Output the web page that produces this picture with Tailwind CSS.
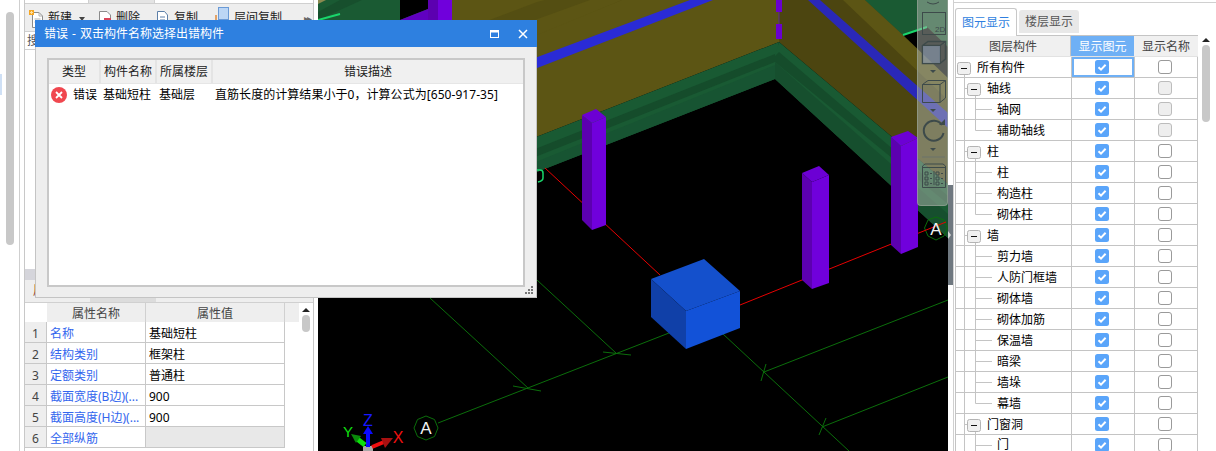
<!DOCTYPE html>
<html lang="zh-CN">
<head>
<meta charset="utf-8">
<title>错误</title>
<script src="https://cdn.jsdelivr.net/npm/@tailwindcss/browser@4"></script>
</head>
<body class="bg-white">
<svg width="0" height="0" class="absolute">
  <defs>
    <symbol id="on" viewBox="0 0 14 14"><rect width="14" height="14" rx="2.5" fill="#5aa5fa"/><path d="M3.5 7.2 6 9.6 10.6 4.8" fill="none" stroke="#fff" stroke-width="2"/></symbol>
    <symbol id="off" viewBox="0 0 14 14"><rect x=".5" y=".5" width="13" height="13" rx="2.5" fill="#fff" stroke="#9a9a9a"/></symbol>
    <symbol id="dis" viewBox="0 0 14 14"><rect x=".5" y=".5" width="13" height="13" rx="2.5" fill="#eeeeee" stroke="#bcbcbc"/></symbol>
    <symbol id="t0" viewBox="0 0 116 21"><path d="M9.500 18V21" fill="none" stroke="#c4c4c4"/><rect x="2.500" y="5.500" width="13" height="12" rx="2" fill="#f0f0f0" stroke="#b4b4b4"/><path d="M6 11.500H12" stroke="#111"/></symbol>
    <symbol id="t1" viewBox="0 0 116 21"><path d="M9.500 0V21M9.500 10.500H12M20.500 17V21" fill="none" stroke="#c4c4c4"/><rect x="12.500" y="5.500" width="13" height="12" rx="2" fill="#f0f0f0" stroke="#b4b4b4"/><path d="M16 11.500H22" stroke="#111"/></symbol>
    <symbol id="tm" viewBox="0 0 116 21"><path d="M9.500 0V21M20.500 0V21M20.500 10.500H37" fill="none" stroke="#c4c4c4"/></symbol>
    <symbol id="tl" viewBox="0 0 116 21"><path d="M9.500 0V21M20.500 0V10.500H37" fill="none" stroke="#c4c4c4"/></symbol>
  </defs>
</svg>

<div class="relative flex w-[1216px] h-[451px] overflow-hidden text-[12px] leading-none text-black bg-white" style="font-family:'Noto Sans','Noto Sans CJK SC',sans-serif">

  <!-- left column -->
  <aside class="flex w-[318px] h-full shrink-0 bg-white">
    <div class="relative w-[20px] shrink-0 border-r border-[#cfcfcf]">
      <div class="absolute left-0 top-[74px] w-[2px] h-[21px] bg-[#cfe0f5]"></div>
      <div class="absolute left-[6px] top-[12px] w-[8px] h-[233px] rounded-full bg-[#c8c8c8]"></div>
    </div>
    <div class="w-[4px] shrink-0"></div>
    <div class="flex flex-col w-[290px] shrink-0 border-x border-[#c8c8c8]">
      <div class="flex h-[4px] shrink-0 border-b border-[#d0d0d0]">
        <div class="w-[64px] bg-white border-r border-[#d0d0d0]"></div>
        <div class="w-[66px] bg-[#e4e4e4] border-r border-[#d0d0d0]"></div>
      </div>
      <div class="flex items-center h-[28px] shrink-0 bg-[#eeeeee] border-b border-[#d0d0d0] text-[#222]">
        <svg class="ml-[4px] mt-[2px]" width="15" height="18" viewBox="0 0 15 18"><path d="M3.500 2.500H10L13.500 6V17.500H3.500Z" fill="#fff" stroke="#8b8b8b"/><path d="M10 2.500V6H13.500M5.500 9H11.500M5.500 12H11.500" fill="none" stroke="#b0b0b0"/><rect x="0" y="0" width="5" height="5" fill="#f5a623"/><path d="M1 2.500H4M2.500 1V4" stroke="#ffe0a0"/></svg>
        <span class="ml-[4px]">新建</span>
        <span class="ml-[7px] mt-[3px] w-0 h-0 border-x-[3px] border-t-[4px] border-x-transparent border-t-[#444]"></span>
        <svg class="ml-[13px] mt-[2px]" width="14" height="18" viewBox="0 0 14 18"><path d="M1.500 1.500H9L12.500 5V17H1.500Z" fill="#fff" stroke="#8b8b8b"/><rect x="6" y="8" width="7" height="7" fill="#d8455a"/></svg>
        <span class="ml-[4px]">删除</span>
        <svg class="ml-[16px] mt-[2px]" width="13" height="18" viewBox="0 0 13 18"><path d="M1.500 1.500H8.500L11.500 5V17H1.500Z" fill="#fff" stroke="#5c7fa8"/><path d="M4 7H9M4 10H9M4 13H9" stroke="#5c7fa8"/></svg>
        <span class="ml-[5px]">复制</span>
        <svg class="ml-[14px] mt-[-3px]" width="17" height="20" viewBox="0 0 17 20"><path d="M1 20V14M4 20V9" stroke="#e08a3c" stroke-width="1.500"/><rect x="6.500" y="1.500" width="10" height="12" fill="#bcd6f5" stroke="#6a9ad6"/></svg>
        <span class="ml-[5px]">层间复制</span>
        <span class="ml-auto mr-[3px] text-[#666] text-[10px] tracking-[-2px]">▸▸</span>
      </div>
      <div class="flex items-center h-[18px] shrink-0 pl-[2px] border-b border-[#d0d0d0] text-[#555]">搜</div>
      <div class="flex-1 bg-white"></div>
      <div class="h-[11px] shrink-0 bg-[#d5d5db]"></div>
      <div class="relative h-[23px] shrink-0 bg-[#eeeeee] border-b border-[#d0d0d0]">
        <span class="absolute left-[8px] top-[5px] text-[#8b3a1a]">属性</span>
        <div class="absolute left-[65px] bottom-0 w-[66px] h-[6px] bg-[#dcdcdc]"></div>
      </div>
      <div class="relative h-[148px] shrink-0">
        <div class="grid grid-cols-[22px_99px_139px_14px] h-[19px] text-[#444]">
          <div class="bg-white"></div>
          <div class="flex items-center justify-center pt-[2px] bg-[#eeeeee] border-r border-[#d0d0d0]">属性名称</div>
          <div class="flex items-center justify-center pt-[2px] bg-[#eeeeee] border-r border-[#d0d0d0]">属性值</div>
          <div class="bg-[#eeeeee]"></div>
        </div>
        <div class="grid grid-cols-[22px_99px_139px] h-[21px] w-[260px]">
          <div class="flex items-center justify-center pt-[3px] bg-[#eeeeee] text-[#444] border-b border-r border-[#c8c8c8]">1</div>
          <div class="flex items-center pl-[3px] pt-[3px] text-[#3366ee] border-b border-r border-[#c8c8c8]">名称</div>
          <div class="flex items-center pl-[3px] pt-[3px] border-b border-r border-[#c8c8c8]">基础短柱</div>
        </div>
        <div class="grid grid-cols-[22px_99px_139px] h-[21px] w-[260px]">
          <div class="flex items-center justify-center pt-[3px] bg-[#eeeeee] text-[#444] border-b border-r border-[#c8c8c8]">2</div>
          <div class="flex items-center pl-[3px] pt-[3px] text-[#3366ee] border-b border-r border-[#c8c8c8]">结构类别</div>
          <div class="flex items-center pl-[3px] pt-[3px] border-b border-r border-[#c8c8c8]">框架柱</div>
        </div>
        <div class="grid grid-cols-[22px_99px_139px] h-[21px] w-[260px]">
          <div class="flex items-center justify-center pt-[3px] bg-[#eeeeee] text-[#444] border-b border-r border-[#c8c8c8]">3</div>
          <div class="flex items-center pl-[3px] pt-[3px] text-[#3366ee] border-b border-r border-[#c8c8c8]">定额类别</div>
          <div class="flex items-center pl-[3px] pt-[3px] border-b border-r border-[#c8c8c8]">普通柱</div>
        </div>
        <div class="grid grid-cols-[22px_99px_139px] h-[21px] w-[260px]">
          <div class="flex items-center justify-center pt-[3px] bg-[#eeeeee] text-[#444] border-b border-r border-[#c8c8c8]">4</div>
          <div class="flex items-center pl-[3px] pt-[3px] text-[#3366ee] border-b border-r border-[#c8c8c8] whitespace-nowrap">截面宽度(B边)(...</div>
          <div class="flex items-center pl-[3px] pt-[3px] border-b border-r border-[#c8c8c8]">900</div>
        </div>
        <div class="grid grid-cols-[22px_99px_139px] h-[21px] w-[260px]">
          <div class="flex items-center justify-center pt-[3px] bg-[#eeeeee] text-[#444] border-b border-r border-[#c8c8c8]">5</div>
          <div class="flex items-center pl-[3px] pt-[3px] text-[#3366ee] border-b border-r border-[#c8c8c8] whitespace-nowrap">截面高度(H边)(...</div>
          <div class="flex items-center pl-[3px] pt-[3px] border-b border-r border-[#c8c8c8]">900</div>
        </div>
        <div class="grid grid-cols-[22px_99px_139px] h-[21px] w-[260px]">
          <div class="flex items-center justify-center pt-[3px] bg-[#eeeeee] text-[#444] border-b border-r border-[#c8c8c8]">6</div>
          <div class="flex items-center pl-[3px] pt-[3px] text-[#3366ee] border-b border-r border-[#c8c8c8]">全部纵筋</div>
          <div class="bg-[#e8e8e8] border-b border-r border-[#c8c8c8]"></div>
        </div>
        <div class="absolute left-[277px] top-[5px] w-[8px] h-[24px] flex flex-col items-center gap-[3px]">
          <span class="w-0 h-0 border-x-[4px] border-b-[4px] border-x-transparent border-b-[#222]"></span>
          <span class="w-[8px] h-[20px] rounded-full bg-[#c8c8c8]"></span>
        </div>
      </div>
    </div>
  </aside>

  <!-- 3D view -->
  <main class="relative w-[630px] h-full shrink-0 bg-black overflow-hidden">
    <svg class="block" width="630" height="451" viewBox="318 0 630 451" style="font-family:'Liberation Sans',sans-serif">
      <!-- far corner at the top -->
      <rect x="318" y="0" width="135" height="40" fill="#1a5a33"/>
      <path d="M400 0H428V9L400 20Z" fill="#000"/>
      <path d="M340 0 362 0 318 20 318 12Z" fill="#174f2d"/>
      <path d="M318 0H326L318 4Z" fill="#8a8a50"/>
      <path d="M318 20 340 14" stroke="#19d66b" stroke-width="2"/>
      <path d="M400 20 428 9V24H400Z" fill="#6000c0"/>
      <rect x="428" y="0" width="10" height="24" fill="#5c00b0"/>
      <rect x="438" y="0" width="14" height="24" fill="#7000dc"/>

      <!-- left wall -->
      <path d="M452 0H779V42L452 170Z" fill="#5c5514"/>
      <path d="M452 34 537 2 545 0H622L452 68Z" fill="#544e12"/>
      <path d="M452 50 590 0H622L452 70Z" fill="#5c5514"/>
      <path d="M452 89 690 0H713L452 101Z" fill="#2a2bd6"/>
      <path d="M452 170 779 42 775 79 452 205Z" fill="#195a33"/>
      <path d="M452 182 775 54V62L452 190Z" fill="#154c2b"/>
      <path d="M452 196 775 65 775 79 452 205Z" fill="#175432"/>

      <!-- right wall -->
      <path d="M779 0H948V184L779 42Z" fill="#4c4510"/>
      <path d="M843 0H865L903 35 948 78V100Z" fill="#5c5514"/>
      <path d="M808 0H820L948 113V128Z" fill="#2a28b8"/>
      <path d="M865 0H948V47L927 27 903 35Z" fill="#1a5a33"/>
      <path d="M903 35 927 27 948 47V78Z" fill="#000"/>
      <path d="M903 35 927 27" stroke="#19d66b" stroke-width="2"/>
      <path d="M779 42 948 184V238L775 79V56Z" fill="#195a33"/>
      <path d="M779 52 948 196V204L775 62V56Z" fill="#154c2b"/>
      <path d="M775 62 948 214V238L775 79Z" fill="#164f2e"/>
      <path d="M776 0H782V12H776ZM776 24H782V39H776Z" fill="#6a00d0"/>
      <path d="M779 12V24" stroke="#5c2a9a"/>

      <!-- grid lines -->
      <g fill="none" stroke="#0b6e0b" stroke-width="1">
        <path d="M438 423 669 333"/>
        <path d="M430 298 528 388M537 280 616 353"/>
        <path d="M513 386 541 391M603 352 631 355"/>
        <path d="M723 334 849 451"/>
        <path d="M766 364 761 381M826 418 819 435"/>
        <path d="M764 372 948 300M822 427 948 377"/>
        <path d="M426 416 434.500 419.500 438 428 434.500 436.500 426 440 417.500 436.500 414 428 417.500 419.500Z"/>
        <path d="M936 217 944 220 947.500 228 944 236 936 240 928 236 924.500 228 928 220Z"/>
      </g>
      <path d="M537 170H540Q543 170 543 173V178Q543 181 538 182" fill="none" stroke="#19d66b" stroke-width="1.500"/>

      <!-- red axes -->
      <g fill="none" stroke="#e60000" stroke-width="1">
        <path d="M545 168 660 275"/>
        <path d="M740 305 946 222"/>
      </g>

      <!-- columns -->
      <path d="M582 115 592 123V230L582 220Z" fill="#5c00b0"/>
      <path d="M592 123 606 117V225L592 230Z" fill="#7000dc"/>
      <path d="M582 115 596 109 606 117 592 123Z" fill="#6c00d4"/>
      <path d="M802 173 812 182V289L802 280Z" fill="#5c00b0"/>
      <path d="M812 182 829 175V283L812 289Z" fill="#7000dc"/>
      <path d="M802 173 819 166 829 175 812 182Z" fill="#6c00d4"/>
      <path d="M891 137 901 146V254L891 245Z" fill="#5c00b0"/>
      <path d="M901 146 918 138V247L901 254Z" fill="#7000dc"/>
      <path d="M891 137 908 131 918 138 901 146Z" fill="#6c00d4"/>

      <!-- cube -->
      <path d="M651 279 704 259 740 291 686 311Z" fill="#1450cc"/>
      <path d="M651 279 686 311V349L651 317Z" fill="#1040a8"/>
      <path d="M686 311 740 291V328L686 349Z" fill="#1252d8"/>

      <text x="426" y="434" text-anchor="middle" font-size="17" fill="#f2f2f2">A</text>
      <text x="936" y="235" text-anchor="middle" font-size="17" fill="#f2f2f2">A</text>

      <!-- axis gizmo -->
      <rect x="363" y="446" width="10" height="5" fill="#a8a8a8"/>
      <path d="M366 447V434H363L368 426 373 434H370V447Z" fill="#0a0aff"/>
      <path d="M365 445 356 438" stroke="#0ce00c" stroke-width="5"/>
      <path d="M351 434 361 436 356 443Z" fill="#0a8a0a"/>
      <path d="M372 447 384 442" stroke="#f01010" stroke-width="4"/>
      <path d="M381 438 393 438 385 448Z" fill="#a81010"/>
      <text x="368" y="426" text-anchor="middle" font-size="16" fill="#1818ff">Z</text>
      <text x="348" y="437" text-anchor="middle" font-size="15" fill="#10e010">Y</text>
      <text x="398" y="443" text-anchor="middle" font-size="16" fill="#f01010">X</text>
    </svg>

    <!-- floating view toolbar -->
    <div class="absolute left-[599px] top-[-4px] w-[31px] h-[210px] rounded-[4px] bg-[#b0b8b0]/50 border border-[#9aa49a]/60">
      <svg class="block" width="31" height="210" viewBox="0 0 31 210" fill="none" stroke="#3d4a4a">
        <path d="M9 5Q15 9 21 5"/>
        <rect x="4.500" y="15.500" width="23" height="22"/>
        <text x="17" y="35" font-size="8" fill="#3d4a4a" stroke="none" style="font-family:'Liberation Sans',sans-serif">2D</text>
        <path d="M4.500 48.500 10 44.500H27.500V62L22 66.500H4.500ZM4.500 48.500H22V66.500M22 48.500 27.500 44.500" stroke-width="1.500"/>
        <rect x="5" y="49" width="17" height="17" fill="#8a9ab0" fill-opacity=".6" stroke="none"/>
        <path d="M12 73H18L15 76Z" fill="#3d4a4a" stroke="none"/>
        <path d="M4.500 87.500 10 83.500H27.500V101L22 105.500H4.500ZM4.500 87.500H22V105.500M22 87.500 27.500 83.500"/>
        <path d="M12 112H18L15 115Z" fill="#3d4a4a" stroke="none"/>
        <path d="M24 128A10 10 0 1 0 25.500 136" stroke-width="2"/>
        <path d="M21 128H27V122Z" fill="#3d4a4a" stroke="none"/>
        <path d="M12 151H18L15 154Z" fill="#3d4a4a" stroke="none"/>
        <path d="M4 160H27" stroke="#6a726a"/>
        <path d="M4.500 169 7 167H25L27.500 169V190.500H4.500ZM4.500 170.500H27.500M16 174V188"/>
        <path d="M7 175H10V178H7ZM7 180H10V183H7ZM7 185H10V188H7ZM12 176.500H14M12 181.500H14M12 186.500H14M18 175H21V178H18ZM18 180H21V183H18ZM18 185H21V188H18ZM23 176.500H25M23 181.500H25M23 186.500H25"/>
      </svg>
    </div>
  </main>

  <!-- narrow splitter -->
  <div class="w-[5px] h-full shrink-0 bg-white pt-[185px]">
    <div class="flex items-center h-[100px] bg-[#6f7880]">
      <span class="w-0 h-0 border-y-[4px] border-l-[3px] border-y-transparent border-l-[#d8d8d8]"></span>
    </div>
  </div>

  <!-- right panel -->
  <section class="relative flex-1 h-full border-l border-[#d0d0d0] bg-white">
    <div class="h-[3px] border-b border-[#d0d0d0] -mr-px"></div>
    <div class="flex items-end h-[32px] pl-[1px] pt-[5px] gap-[2px]">
      <div class="flex items-center justify-center w-[62px] h-[28px] -mb-px z-10 rounded-t-[3px] border border-b-0 border-[#c8c8c8] bg-white text-[#2f7fe0]">图元显示</div>
      <div class="flex items-center justify-center w-[60px] h-[23px] mb-[2px] rounded-t-[3px] bg-[#e8e8e8] text-[#555]">楼层显示</div>
    </div>

    <div class="ml-[1px] w-[243px] border-l border-t border-[#c4c4c4]">
      <div class="grid grid-cols-[115px_63px_64px] h-[21px] bg-[#f0f0f0] border-b border-[#e2e2e2] text-[#444]">
        <div class="flex items-center justify-center pt-[2px] border-r border-[#c4c4c4]">图层构件</div>
        <div class="flex items-center justify-center pt-[2px] bg-[#6fb0f5] text-white">显示图元</div>
        <div class="flex items-center justify-center pt-[2px]">显示名称</div>
      </div>
      <div class="grid grid-cols-[116px_62px_64px] h-[21px] border-b border-[#c4c4c4]">
        <div class="relative flex items-center pl-[21px] pt-[2px] border-r border-[#c4c4c4]"><svg class="absolute left-[-1px] top-0 w-[116px] h-[21px]"><use href="#t0"/></svg>所有构件</div>
        <div class="flex items-center justify-center pr-[2px] outline-2 -outline-offset-2 outline-[#6fb0f5]"><svg class="w-[14px] h-[14px]"><use href="#on"/></svg></div>
        <div class="flex items-center justify-center pr-[2px] border-x border-[#c4c4c4]"><svg class="w-[14px] h-[14px]"><use href="#off"/></svg></div>
      </div>
      <div class="grid grid-cols-[116px_62px_64px] h-[21px] border-b border-[#c4c4c4]">
        <div class="relative flex items-center pl-[31px] pt-[2px] border-r border-[#c4c4c4]"><svg class="absolute left-[-1px] top-0 w-[116px] h-[21px]"><use href="#t1"/></svg>轴线</div>
        <div class="flex items-center justify-center pr-[2px]"><svg class="w-[14px] h-[14px]"><use href="#on"/></svg></div>
        <div class="flex items-center justify-center pr-[2px] border-x border-[#c4c4c4]"><svg class="w-[14px] h-[14px]"><use href="#dis"/></svg></div>
      </div>
      <div class="grid grid-cols-[116px_62px_64px] h-[21px] border-b border-[#c4c4c4]">
        <div class="relative flex items-center pl-[41px] pt-[2px] border-r border-[#c4c4c4]"><svg class="absolute left-[-1px] top-0 w-[116px] h-[21px]"><use href="#tm"/></svg>轴网</div>
        <div class="flex items-center justify-center pr-[2px]"><svg class="w-[14px] h-[14px]"><use href="#on"/></svg></div>
        <div class="flex items-center justify-center pr-[2px] border-x border-[#c4c4c4]"><svg class="w-[14px] h-[14px]"><use href="#dis"/></svg></div>
      </div>
      <div class="grid grid-cols-[116px_62px_64px] h-[21px] border-b border-[#c4c4c4]">
        <div class="relative flex items-center pl-[41px] pt-[2px] border-r border-[#c4c4c4]"><svg class="absolute left-[-1px] top-0 w-[116px] h-[21px]"><use href="#tl"/></svg>辅助轴线</div>
        <div class="flex items-center justify-center pr-[2px]"><svg class="w-[14px] h-[14px]"><use href="#on"/></svg></div>
        <div class="flex items-center justify-center pr-[2px] border-x border-[#c4c4c4]"><svg class="w-[14px] h-[14px]"><use href="#dis"/></svg></div>
      </div>
      <div class="grid grid-cols-[116px_62px_64px] h-[21px] border-b border-[#c4c4c4]">
        <div class="relative flex items-center pl-[31px] pt-[2px] border-r border-[#c4c4c4]"><svg class="absolute left-[-1px] top-0 w-[116px] h-[21px]"><use href="#t1"/></svg>柱</div>
        <div class="flex items-center justify-center pr-[2px]"><svg class="w-[14px] h-[14px]"><use href="#on"/></svg></div>
        <div class="flex items-center justify-center pr-[2px] border-x border-[#c4c4c4]"><svg class="w-[14px] h-[14px]"><use href="#off"/></svg></div>
      </div>
      <div class="grid grid-cols-[116px_62px_64px] h-[21px] border-b border-[#c4c4c4]">
        <div class="relative flex items-center pl-[41px] pt-[2px] border-r border-[#c4c4c4]"><svg class="absolute left-[-1px] top-0 w-[116px] h-[21px]"><use href="#tm"/></svg>柱</div>
        <div class="flex items-center justify-center pr-[2px]"><svg class="w-[14px] h-[14px]"><use href="#on"/></svg></div>
        <div class="flex items-center justify-center pr-[2px] border-x border-[#c4c4c4]"><svg class="w-[14px] h-[14px]"><use href="#off"/></svg></div>
      </div>
      <div class="grid grid-cols-[116px_62px_64px] h-[21px] border-b border-[#c4c4c4]">
        <div class="relative flex items-center pl-[41px] pt-[2px] border-r border-[#c4c4c4]"><svg class="absolute left-[-1px] top-0 w-[116px] h-[21px]"><use href="#tm"/></svg>构造柱</div>
        <div class="flex items-center justify-center pr-[2px]"><svg class="w-[14px] h-[14px]"><use href="#on"/></svg></div>
        <div class="flex items-center justify-center pr-[2px] border-x border-[#c4c4c4]"><svg class="w-[14px] h-[14px]"><use href="#off"/></svg></div>
      </div>
      <div class="grid grid-cols-[116px_62px_64px] h-[21px] border-b border-[#c4c4c4]">
        <div class="relative flex items-center pl-[41px] pt-[2px] border-r border-[#c4c4c4]"><svg class="absolute left-[-1px] top-0 w-[116px] h-[21px]"><use href="#tl"/></svg>砌体柱</div>
        <div class="flex items-center justify-center pr-[2px]"><svg class="w-[14px] h-[14px]"><use href="#on"/></svg></div>
        <div class="flex items-center justify-center pr-[2px] border-x border-[#c4c4c4]"><svg class="w-[14px] h-[14px]"><use href="#off"/></svg></div>
      </div>
      <div class="grid grid-cols-[116px_62px_64px] h-[21px] border-b border-[#c4c4c4]">
        <div class="relative flex items-center pl-[31px] pt-[2px] border-r border-[#c4c4c4]"><svg class="absolute left-[-1px] top-0 w-[116px] h-[21px]"><use href="#t1"/></svg>墙</div>
        <div class="flex items-center justify-center pr-[2px]"><svg class="w-[14px] h-[14px]"><use href="#on"/></svg></div>
        <div class="flex items-center justify-center pr-[2px] border-x border-[#c4c4c4]"><svg class="w-[14px] h-[14px]"><use href="#off"/></svg></div>
      </div>
      <div class="grid grid-cols-[116px_62px_64px] h-[21px] border-b border-[#c4c4c4]">
        <div class="relative flex items-center pl-[41px] pt-[2px] border-r border-[#c4c4c4]"><svg class="absolute left-[-1px] top-0 w-[116px] h-[21px]"><use href="#tm"/></svg>剪力墙</div>
        <div class="flex items-center justify-center pr-[2px]"><svg class="w-[14px] h-[14px]"><use href="#on"/></svg></div>
        <div class="flex items-center justify-center pr-[2px] border-x border-[#c4c4c4]"><svg class="w-[14px] h-[14px]"><use href="#off"/></svg></div>
      </div>
      <div class="grid grid-cols-[116px_62px_64px] h-[21px] border-b border-[#c4c4c4]">
        <div class="relative flex items-center pl-[41px] pt-[2px] border-r border-[#c4c4c4]"><svg class="absolute left-[-1px] top-0 w-[116px] h-[21px]"><use href="#tm"/></svg>人防门框墙</div>
        <div class="flex items-center justify-center pr-[2px]"><svg class="w-[14px] h-[14px]"><use href="#on"/></svg></div>
        <div class="flex items-center justify-center pr-[2px] border-x border-[#c4c4c4]"><svg class="w-[14px] h-[14px]"><use href="#off"/></svg></div>
      </div>
      <div class="grid grid-cols-[116px_62px_64px] h-[21px] border-b border-[#c4c4c4]">
        <div class="relative flex items-center pl-[41px] pt-[2px] border-r border-[#c4c4c4]"><svg class="absolute left-[-1px] top-0 w-[116px] h-[21px]"><use href="#tm"/></svg>砌体墙</div>
        <div class="flex items-center justify-center pr-[2px]"><svg class="w-[14px] h-[14px]"><use href="#on"/></svg></div>
        <div class="flex items-center justify-center pr-[2px] border-x border-[#c4c4c4]"><svg class="w-[14px] h-[14px]"><use href="#off"/></svg></div>
      </div>
      <div class="grid grid-cols-[116px_62px_64px] h-[21px] border-b border-[#c4c4c4]">
        <div class="relative flex items-center pl-[41px] pt-[2px] border-r border-[#c4c4c4]"><svg class="absolute left-[-1px] top-0 w-[116px] h-[21px]"><use href="#tm"/></svg>砌体加筋</div>
        <div class="flex items-center justify-center pr-[2px]"><svg class="w-[14px] h-[14px]"><use href="#on"/></svg></div>
        <div class="flex items-center justify-center pr-[2px] border-x border-[#c4c4c4]"><svg class="w-[14px] h-[14px]"><use href="#off"/></svg></div>
      </div>
      <div class="grid grid-cols-[116px_62px_64px] h-[21px] border-b border-[#c4c4c4]">
        <div class="relative flex items-center pl-[41px] pt-[2px] border-r border-[#c4c4c4]"><svg class="absolute left-[-1px] top-0 w-[116px] h-[21px]"><use href="#tm"/></svg>保温墙</div>
        <div class="flex items-center justify-center pr-[2px]"><svg class="w-[14px] h-[14px]"><use href="#on"/></svg></div>
        <div class="flex items-center justify-center pr-[2px] border-x border-[#c4c4c4]"><svg class="w-[14px] h-[14px]"><use href="#off"/></svg></div>
      </div>
      <div class="grid grid-cols-[116px_62px_64px] h-[21px] border-b border-[#c4c4c4]">
        <div class="relative flex items-center pl-[41px] pt-[2px] border-r border-[#c4c4c4]"><svg class="absolute left-[-1px] top-0 w-[116px] h-[21px]"><use href="#tm"/></svg>暗梁</div>
        <div class="flex items-center justify-center pr-[2px]"><svg class="w-[14px] h-[14px]"><use href="#on"/></svg></div>
        <div class="flex items-center justify-center pr-[2px] border-x border-[#c4c4c4]"><svg class="w-[14px] h-[14px]"><use href="#off"/></svg></div>
      </div>
      <div class="grid grid-cols-[116px_62px_64px] h-[21px] border-b border-[#c4c4c4]">
        <div class="relative flex items-center pl-[41px] pt-[2px] border-r border-[#c4c4c4]"><svg class="absolute left-[-1px] top-0 w-[116px] h-[21px]"><use href="#tm"/></svg>墙垛</div>
        <div class="flex items-center justify-center pr-[2px]"><svg class="w-[14px] h-[14px]"><use href="#on"/></svg></div>
        <div class="flex items-center justify-center pr-[2px] border-x border-[#c4c4c4]"><svg class="w-[14px] h-[14px]"><use href="#off"/></svg></div>
      </div>
      <div class="grid grid-cols-[116px_62px_64px] h-[21px] border-b border-[#c4c4c4]">
        <div class="relative flex items-center pl-[41px] pt-[2px] border-r border-[#c4c4c4]"><svg class="absolute left-[-1px] top-0 w-[116px] h-[21px]"><use href="#tl"/></svg>幕墙</div>
        <div class="flex items-center justify-center pr-[2px]"><svg class="w-[14px] h-[14px]"><use href="#on"/></svg></div>
        <div class="flex items-center justify-center pr-[2px] border-x border-[#c4c4c4]"><svg class="w-[14px] h-[14px]"><use href="#off"/></svg></div>
      </div>
      <div class="grid grid-cols-[116px_62px_64px] h-[21px] border-b border-[#c4c4c4]">
        <div class="relative flex items-center pl-[31px] pt-[2px] border-r border-[#c4c4c4]"><svg class="absolute left-[-1px] top-0 w-[116px] h-[21px]"><use href="#t1"/></svg>门窗洞</div>
        <div class="flex items-center justify-center pr-[2px]"><svg class="w-[14px] h-[14px]"><use href="#on"/></svg></div>
        <div class="flex items-center justify-center pr-[2px] border-x border-[#c4c4c4]"><svg class="w-[14px] h-[14px]"><use href="#off"/></svg></div>
      </div>
      <div class="grid grid-cols-[116px_62px_64px] h-[21px] border-b border-[#c4c4c4]">
        <div class="relative flex items-center pl-[41px] border-r border-[#c4c4c4]"><svg class="absolute left-[-1px] top-0 w-[116px] h-[21px]"><use href="#tm"/></svg>门</div>
        <div class="flex items-center justify-center pr-[2px]"><svg class="w-[14px] h-[14px]"><use href="#on"/></svg></div>
        <div class="flex items-center justify-center pr-[2px] border-x border-[#c4c4c4]"><svg class="w-[14px] h-[14px]"><use href="#off"/></svg></div>
      </div>
    </div>

    <div class="absolute left-[248px] top-[38px] flex flex-col items-center gap-[3px]">
      <span class="w-0 h-0 border-x-[4px] border-b-[4px] border-x-transparent border-b-[#222]"></span>
      <span class="w-[8px] h-[77px] rounded-full bg-[#c8c8c8]"></span>
    </div>
  </section>

  <!-- error dialog -->
  <div class="absolute left-[35px] top-[20px] flex flex-col w-[502px] h-[278px] bg-[#eeeeee] border-b border-r border-l border-[#c4c4c4]">
    <div class="flex items-center h-[27px] shrink-0 -mx-px pl-[9px] bg-[#2e80e0] text-white">
      <span class="[word-spacing:1px]">错误 - 双击构件名称选择出错构件</span>
      <svg class="ml-auto" width="9" height="8" viewBox="0 0 9 8" fill="none" stroke="#fff"><rect x=".5" y=".5" width="8" height="7"/><path d="M0 1.500H9" stroke-width="2"/></svg>
      <svg class="ml-[19px] mr-[9px]" width="10" height="10" viewBox="0 0 10 10" fill="none" stroke="#fff" stroke-width="1.500"><path d="M1 1 9 9M9 1 1 9"/></svg>
    </div>
    <div class="flex flex-col w-[478px] h-[229px] ml-[11px] mt-[11px] border-2 border-[#c8c8c8] bg-white">
      <div class="grid grid-cols-[52px_56px_56px_1fr] h-[24px] shrink-0 bg-[#f0f0f0] border-b border-[#e6e6e6] text-[#222]">
        <div class="flex items-center justify-center border-r-2 border-[#e4e4e4]">类型</div>
        <div class="flex items-center justify-center border-r-2 border-[#e4e4e4]">构件名称</div>
        <div class="flex items-center justify-center border-r-2 border-[#e4e4e4]">所属楼层</div>
        <div class="flex items-center justify-center">错误描述</div>
      </div>
      <div class="flex items-center h-[22px] whitespace-nowrap">
        <svg class="ml-[2px]" width="16" height="16" viewBox="0 0 16 16"><circle cx="8" cy="8" r="8" fill="#f0474f"/><path d="M5 5 11 11M11 5 5 11" stroke="#fff" stroke-width="1.800"/></svg>
        <span class="ml-[6px] w-[30px]">错误</span>
        <span class="w-[56px]">基础短柱</span>
        <span class="w-[56px]">基础层</span>
        <span class="tracking-[0.05px]">直筋长度的计算结果小于0，计算公式为[650-917-35]</span>
      </div>
    </div>
    <svg class="absolute right-[3px] bottom-[3px]" width="8" height="8" viewBox="0 0 8 8" fill="#777"><rect x="6" y="0" width="2" height="2"/><rect x="3" y="3" width="2" height="2"/><rect x="6" y="3" width="2" height="2"/><rect x="0" y="6" width="2" height="2"/><rect x="3" y="6" width="2" height="2"/><rect x="6" y="6" width="2" height="2"/></svg>
  </div>
</div>
</body>
</html>
